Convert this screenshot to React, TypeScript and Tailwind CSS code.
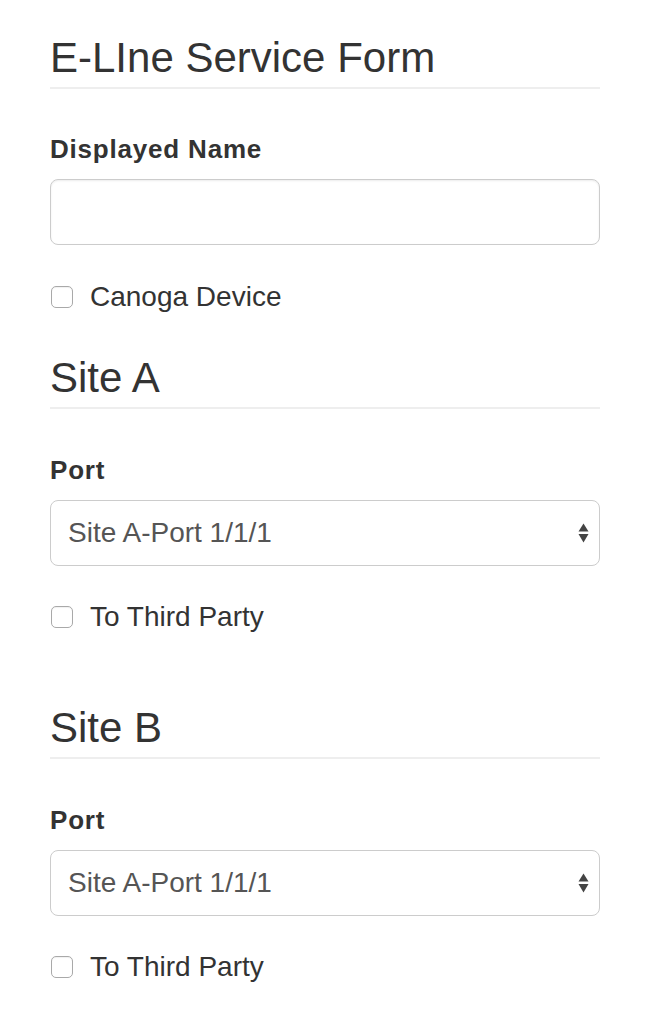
import React from "react";

function SelectArrows() {
    return (
        <svg width="11" height="20" viewBox="0 0 11 20" className="pointer-events-none absolute right-[11px] top-1/2 -translate-y-1/2">
            <polygon points="5.5,0.5 10.5,8.5 0.5,8.5" fill="#444" />
            <polygon points="0.5,11 10.5,11 5.5,19.5" fill="#444" />
        </svg>
    );
}

function CheckRow({ label, className }: { label: string; className?: string }) {
    return (
        <label className={`flex items-center h-[32px] ${className ?? ""}`}>
            <span className="block w-[22px] h-[22px] ml-[1px] rounded-[5px] border border-[#a9a9a9] bg-white shadow-[inset_0_1px_1px_rgba(0,0,0,0.06)]" />
            <span className="ml-[17px] text-[28px] leading-[32px] text-[#333]">{label}</span>
        </label>
    );
}

function SectionTitle({ children, className }: { children: React.ReactNode; className?: string }) {
    return (
        <h3 className={`text-[42px] leading-[46px] text-[#333] font-normal pb-[6px] border-b-2 border-[#eeeeee] ${className ?? ""}`}>
            {children}
        </h3>
    );
}

function PortSelect({ className }: { className?: string }) {
    return (
        <div className={`flex flex-col ${className ?? ""}`}>
            <label className="text-[26px] leading-[30px] font-bold tracking-[0.8px] text-[#333]">Port</label>
            <div className="relative mt-[15px]">
                <select className="appearance-none w-full h-[66px] rounded-[8px] border border-[#cccccc] bg-white pl-[17px] text-[28px] text-[#555] outline-none">
                    <option>Site A-Port 1/1/1</option>
                </select>
                <SelectArrows />
            </div>
        </div>
    );
}

export default function App() {
    return (
        <div className="min-h-screen bg-white" style={{ fontFamily: '"Liberation Sans", Arial, sans-serif' }}>
            <form className="flex flex-col w-[550px] ml-[50px] pt-[35px] pb-[40px]">
                <SectionTitle>E-LIne Service Form</SectionTitle>

                {/* Displayed name */}
                <div className="flex flex-col mt-[45px]">
                    <label className="text-[26px] leading-[30px] font-bold tracking-[0.8px] text-[#333]">Displayed Name</label>
                    <input
                        type="text"
                        className="mt-[15px] h-[66px] rounded-[8px] border border-[#cccccc] bg-white px-[17px] text-[28px] text-[#555] shadow-[inset_0_1px_2px_rgba(0,0,0,0.08)] outline-none"
                    />
                </div>
                <CheckRow label="Canoga Device" className="mt-[36px]" />

                {/* Site A */}
                <SectionTitle className="mt-[42px]">Site A</SectionTitle>
                <PortSelect className="mt-[46px]" />
                <CheckRow label="To Third Party" className="mt-[35px]" />

                {/* Site B */}
                <SectionTitle className="mt-[72px]">Site B</SectionTitle>
                <PortSelect className="mt-[46px]" />
                <CheckRow label="To Third Party" className="mt-[35px]" />
            </form>
        </div>
    );
}
